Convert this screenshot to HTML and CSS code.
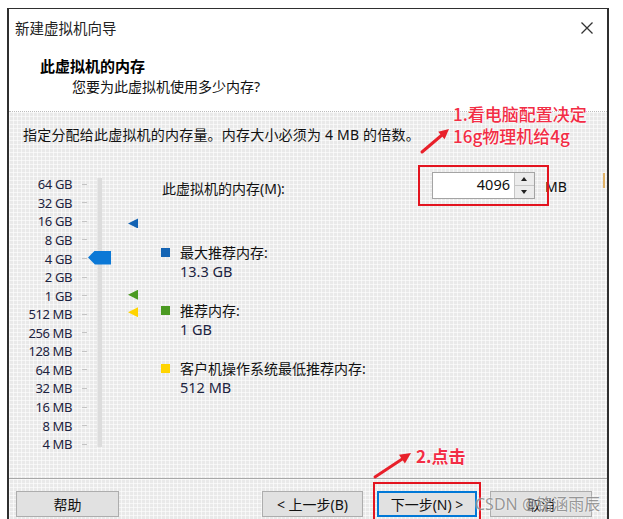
FILE: index.html
```html
<!DOCTYPE html>
<html lang="zh-CN">
<head>
    <meta charset="UTF-8">
    <title>新建虚拟机向导</title>
    <link rel="stylesheet" href="styles.css">
</head>
<body>
    <div class="wizard">
        <div class="wizard-header">
            <div class="title-row">
                <span class="title">新建虚拟机向导</span>
                <svg class="close" width="12" height="12" viewBox="0 0 12 12">
                    <path d="M0.5 0.5 L11.5 11.5 M11.5 0.5 L0.5 11.5" stroke="#333" stroke-width="1.3" fill="none"/>
                </svg>
            </div>
            <h1>此虚拟机的内存</h1>
            <p class="subtitle">您要为此虚拟机使用多少内存?</p>
        </div>

        <div class="wizard-body">
            <p class="intro">指定分配给此虚拟机的内存量。内存大小必须为 4 MB 的倍数。</p>

            <div class="memory-panel">
                <!-- slider scale -->
                <div class="scale">
                    <div class="track"></div>
                    <div class="thumb"></div>
                    <div class="marker marker-max"></div>
                    <div class="marker marker-rec"></div>
                    <div class="marker marker-min"></div>
                    <span class="scale-label">64 GB</span>
                    <span class="scale-label">32 GB</span>
                    <span class="scale-label">16 GB</span>
                    <span class="scale-label">8 GB</span>
                    <span class="scale-label">4 GB</span>
                    <span class="scale-label">2 GB</span>
                    <span class="scale-label">1 GB</span>
                    <span class="scale-label">512 MB</span>
                    <span class="scale-label">256 MB</span>
                    <span class="scale-label">128 MB</span>
                    <span class="scale-label">64 MB</span>
                    <span class="scale-label">32 MB</span>
                    <span class="scale-label">16 MB</span>
                    <span class="scale-label">8 MB</span>
                    <span class="scale-label">4 MB</span>
                </div>

                <div class="settings">
                    <div class="memory-row">
                        <label>此虚拟机的内存(M):</label>
                        <div class="spin">
                            <span class="spin-value">4096</span>
                            <div class="spin-buttons">
                                <span class="spin-btn up"></span>
                                <span class="spin-btn down"></span>
                            </div>
                        </div>
                        <span class="unit">MB</span>
                    </div>

                    <div class="legend">
                        <div class="legend-item">
                            <span class="swatch swatch-blue"></span>
                            <div>
                                <div>最大推荐内存:</div>
                                <div class="legend-value">13.3 GB</div>
                            </div>
                        </div>
                        <div class="legend-item">
                            <span class="swatch swatch-green"></span>
                            <div>
                                <div>推荐内存:</div>
                                <div class="legend-value">1 GB</div>
                            </div>
                        </div>
                        <div class="legend-item">
                            <span class="swatch swatch-yellow"></span>
                            <div>
                                <div>客户机操作系统最低推荐内存:</div>
                                <div class="legend-value">512 MB</div>
                            </div>
                        </div>
                    </div>
                </div>
            </div>
        </div>

        <div class="wizard-footer">
            <button class="btn btn-help">帮助</button>
            <span class="spacer"></span>
            <button class="btn btn-prev">&lt; 上一步(B)</button>
            <button class="btn btn-next">下一步(N) &gt;</button>
            <button class="btn btn-cancel">取消</button>
        </div>
    </div>

    <!-- annotations drawn over the screenshot -->
    <div class="callout-box box-memory"></div>
    <div class="callout-box box-next"></div>
    <div class="note note-memory">1.看电脑配置决定<br>16g物理机给4g</div>
    <div class="note note-next">2.点击</div>
    <svg class="arrows" width="623" height="519" viewBox="0 0 623 519">
        <line x1="422" y1="152" x2="442" y2="135" stroke="#e8202a" stroke-width="3" stroke-linecap="round"/>
        <polygon points="449,129 444.6,139.2 438.2,131.8" fill="#e8202a"/>
        <line x1="375" y1="477" x2="403" y2="458.5" stroke="#e8202a" stroke-width="3" stroke-linecap="round"/>
        <polygon points="411,453 404.9,463.6 399,454.7" fill="#e8202a"/>
    </svg>
    <div class="watermark">CSDN @铭涵雨辰</div>
    <div class="edge-mark"></div>
</body>
</html>
```

FILE: styles.css
```css
body {
    margin: 0;
    background: #fff;
    font-family: "Noto Sans", "Noto Sans CJK SC", sans-serif;
    font-size: 14px;
    color: #111;
    position: relative;
    width: 623px;
    height: 519px;
    overflow: hidden;
}

.wizard {
    margin: 8px 0 0 7px;
    width: 602px;
    border: 2px solid #2f2f2f;
    border-top-width: 1px;
    border-bottom: none;
    box-sizing: border-box;
}

/* Header */
.wizard-header {
    height: 103px;
    padding-top: 9px;
    background: #fff;
    border-bottom: 1px dotted #bcbcbc;
    box-sizing: border-box;
}

.title-row {
    display: flex;
    justify-content: space-between;
    align-items: center;
    padding-left: 6px;
    padding-right: 14px;
}

.title {
    font-size: 14.5px;
    line-height: 20px;
    color: #222;
}

h1 {
    margin: 18px 0 0;
    padding-left: 31px;
    font-size: 15px;
    line-height: 20px;
    font-weight: bold;
    color: #000;
}

.subtitle {
    margin: 1px 0 0;
    padding-left: 63px;
    line-height: 20px;
    color: #111;
}

/* Body */
.wizard-body,
.wizard-footer {
    background-color: #e9e9e9;
    background-image:
        linear-gradient(90deg, rgba(255,255,255,0.6) 1px, transparent 1px),
        linear-gradient(rgba(255,255,255,0.6) 1px, transparent 1px);
    background-size: 4px 4px;
}

.wizard-body {
    height: 366px;
    padding: 13px 0 0 14px;
    box-sizing: border-box;
}

.intro {
    margin: 0;
    line-height: 20px;
    letter-spacing: 0.2px;
}

.memory-panel {
    display: flex;
    margin-top: 27px;
}

/* Slider scale */
.scale {
    display: grid;
    grid-template-columns: 65px 23px 27px;
    grid-template-rows: repeat(15, 18.57px);
    margin-top: 3px;
}

.scale-label {
    grid-column: 1;
    display: flex;
    justify-content: flex-end;
    align-items: center;
    font-size: 13px;
    letter-spacing: -0.4px;
    color: #1c2340;
    line-height: 18px;
    white-space: pre;
}

.scale-label::after {
    content: "";
    width: 5px;
    height: 1px;
    margin: 0 1px 0 10px;
    background: #c4c4c4;
}

.track {
    grid-column: 2;
    grid-row: 1 / -1;
    justify-self: center;
    width: 4px;
    margin: 3px 0 6px;
    background: #dcdcdc;
    border-left: 1px solid #e8e8e8;
}

.thumb {
    grid-column: 2;
    grid-row: 5;
    align-self: center;
    width: 23px;
    height: 14px;
    margin-top: -2px;
    background: #0b78d6;
    clip-path: polygon(0 50%, 30% 0, 100% 0, 100% 100%, 30% 100%);
}

.marker {
    grid-column: 3;
    align-self: center;
    justify-self: end;
    width: 10px;
    height: 10px;
    clip-path: polygon(0 50%, 100% 0, 100% 100%);
}

.marker-max {
    grid-row: 3;
    margin-top: 4px;
    background: #1363b3;
}

.marker-rec {
    grid-row: 7;
    margin-top: -2px;
    background: #4b9a22;
}

.marker-min {
    grid-row: 8;
    margin-top: -4px;
    background: #ffd400;
}

/* Settings column */
.settings {
    margin-left: 22px;
}

.memory-row {
    display: flex;
    align-items: center;
    height: 27px;
}

.memory-row label {
    width: 270px;
    padding-left: 2px;
    margin-top: 4px;
}

.spin {
    display: flex;
    width: 103px;
    height: 27px;
    border: 1px solid #a4a4a4;
    background: #fff;
    box-sizing: border-box;
}

.spin-value {
    flex: 1;
    text-align: right;
    padding-right: 4px;
    font-size: 14.5px;
    line-height: 23px;
}

.spin-buttons {
    display: flex;
    flex-direction: column;
    width: 19px;
    border-left: 1px solid #c6c6c6;
}

.spin-btn {
    flex: 1;
    background: #ececec;
    position: relative;
}

.spin-btn.up {
    border-bottom: 1px solid #c6c6c6;
}

.spin-btn::after {
    content: "";
    position: absolute;
    left: 6px;
    top: 4px;
    border-left: 3.5px solid transparent;
    border-right: 3.5px solid transparent;
}

.spin-btn.up::after {
    border-bottom: 4px solid #222;
}

.spin-btn.down::after {
    border-top: 4px solid #222;
}

.unit {
    margin-left: 10px;
    margin-top: 2px;
}

.legend {
    display: flex;
    flex-direction: column;
    gap: 22px;
    margin-top: 45px;
    padding-left: 1px;
}

.legend-item {
    display: flex;
    line-height: 18px;
}

.legend-value {
    color: #1c2340;
    font-size: 14.5px;
}

.swatch {
    width: 9px;
    height: 9px;
    margin: 4px 10px 0 0;
    flex-shrink: 0;
}

.swatch-blue { background: #1363b3; }
.swatch-green { background: #4b9a22; }
.swatch-yellow { background: #ffd400; }

/* Footer */
.wizard-footer {
    display: flex;
    align-items: flex-start;
    height: 60px;
    padding: 12px 15px 0 7px;
    border-top: 1px solid #a8a8a8;
    box-sizing: border-box;
}

.spacer {
    flex: 1;
}

.btn {
    height: 26px;
    padding: 0;
    border: 1px solid #adadad;
    background: #e1e1e1;
    font-family: "Noto Sans", "Noto Sans CJK SC", sans-serif;
    font-size: 14px;
    color: #111;
    box-sizing: border-box;
}

.btn-help { width: 103px; }
.btn-prev { width: 101px; }

.btn-next {
    width: 100px;
    margin-left: 14px;
    border-color: #0078d7;
    box-shadow: inset 0 0 0 1px #0078d7;
}

.btn-cancel {
    width: 102px;
    margin-left: 13px;
}

/* Annotations */
.callout-box {
    position: absolute;
    border: 2px solid #e3141f;
    box-sizing: border-box;
}

.box-memory {
    left: 418px;
    top: 165px;
    width: 131px;
    height: 41px;
}

.box-next {
    left: 373px;
    top: 482px;
    width: 108px;
    height: 40px;
}

.note {
    position: absolute;
    font-family: "Noto Sans CJK SC", sans-serif;
    font-size: 17px;
    font-weight: 500;
    line-height: 22px;
    color: #f22d45;
    text-shadow: 0 0 2px #fff, 0 0 2px #fff;
}

.note-memory {
    left: 453px;
    top: 103px;
}

.note-next {
    left: 416px;
    top: 445px;
    font-weight: bold;
}

.arrows {
    position: absolute;
    left: 0;
    top: 0;
    pointer-events: none;
}

.watermark {
    position: absolute;
    left: 475px;
    top: 494px;
    font-family: "Noto Sans", "Noto Sans CJK SC", sans-serif;
    font-size: 16px;
    line-height: 20px;
    color: rgba(110, 110, 110, 0.7);
    text-shadow: 0 0 2px #fff;
}

.edge-mark {
    position: absolute;
    left: 603px;
    top: 173px;
    width: 2px;
    height: 15px;
    background: #e2b46a;
}
```
